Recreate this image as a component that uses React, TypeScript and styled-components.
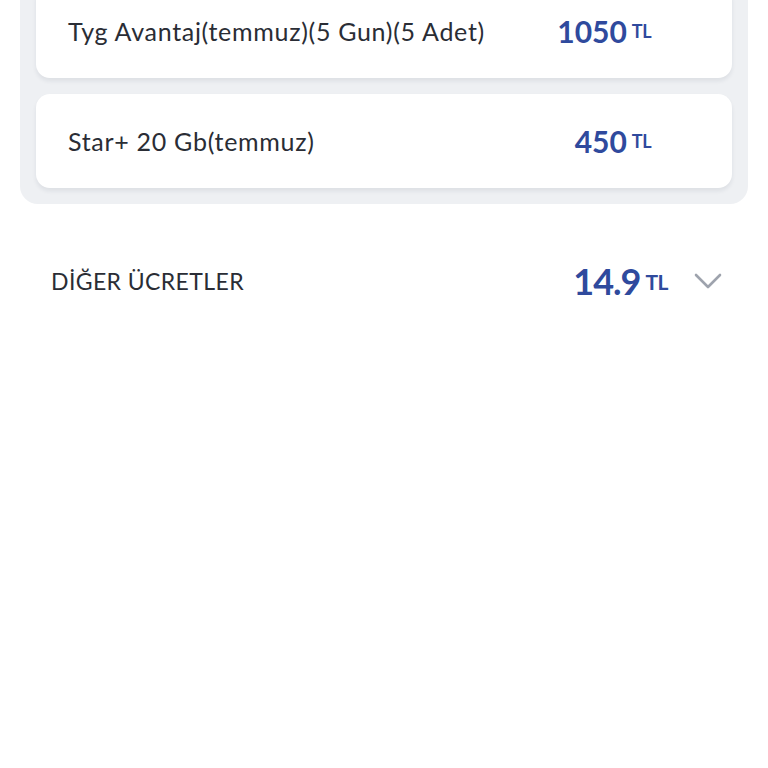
import React from 'react';
import styled, { createGlobalStyle } from 'styled-components';

const GlobalStyle = createGlobalStyle`
  html, body {
    margin: 0;
    padding: 0;
    background: #ffffff;
    font-family: 'Lato', 'Noto Sans', sans-serif;
    overflow: hidden;
  }
`;

const Page = styled.div`
  width: 768px;
  height: 768px;
  display: flex;
  flex-direction: column;
`;

const Panel = styled.div`
  margin: -32px 20px 0 20px;
  padding: 16px;
  background: #eef0f3;
  border-radius: 18px;
  display: flex;
  flex-direction: column;
  gap: 16px;
`;

const Card = styled.div`
  height: 94px;
  background: #ffffff;
  border-radius: 14px;
  box-shadow: 0 3px 4px rgba(30, 40, 60, 0.08);
  display: flex;
  align-items: center;
  padding: 0 81px 0 32px;
`;

const Label = styled.span`
  flex: 1;
  font-size: 25px;
  color: #2a2d35;
  letter-spacing: 0.7px;
`;

const Price = styled.span<{ $big?: boolean }>`
  display: flex;
  align-items: center;
  gap: 5px;
  color: #2f4a9d;
  font-weight: 700;
  font-size: ${(p) => (p.$big ? '36px' : '30px')};
  letter-spacing: ${(p) => (p.$big ? '-1px' : '0px')};
`;

const Unit = styled.span<{ $big?: boolean }>`
  font-size: ${(p) => (p.$big ? '21px' : '18px')};
  letter-spacing: -0.5px;
`;

const FeeRow = styled.div`
  display: flex;
  align-items: center;
  height: 60px;
  margin-top: 47px;
  padding: 0 46px 0 51px;
`;

const FeeLabel = styled.span`
  flex: 1;
  font-size: 23px;
  color: #2a2d35;
  letter-spacing: 0.4px;
`;

const Chevron = styled.svg`
  margin-left: 26px;
  width: 28px;
  height: 18px;
`;

const items = [
  { name: 'Tyg Avantaj(temmuz)(5 Gun)(5 Adet)', price: '1050' },
  { name: 'Star+ 20 Gb(temmuz)', price: '450' },
];

export default function App() {
  return (
    <Page>
      <GlobalStyle />
      <Panel>
        {items.map((it) => (
          <Card key={it.name}>
            <Label>{it.name}</Label>
            <Price>
              {it.price}
              <Unit>TL</Unit>
            </Price>
          </Card>
        ))}
      </Panel>
      <FeeRow>
        <FeeLabel>DİĞER ÜCRETLER</FeeLabel>
        <Price $big>
          14.9
          <Unit $big>TL</Unit>
        </Price>
        <Chevron viewBox="0 0 28 18" fill="none">
          <path d="M2 3 L14 15 L26 3" stroke="#9ea3ad" strokeWidth="2.6" strokeLinecap="round" strokeLinejoin="round" />
        </Chevron>
      </FeeRow>
    </Page>
  );
}
